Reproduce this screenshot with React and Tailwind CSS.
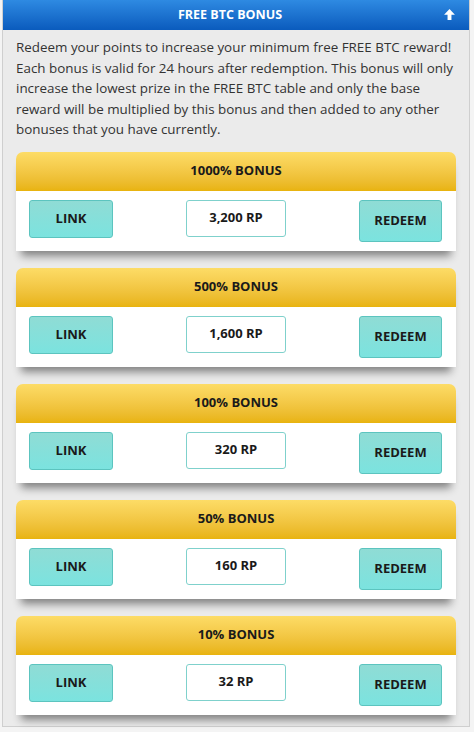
import React from "react";

const bonuses = [
  { pct: "1000%", rp: "3,200 RP" },
  { pct: "500%", rp: "1,600 RP" },
  { pct: "100%", rp: "320 RP" },
  { pct: "50%", rp: "160 RP" },
  { pct: "10%", rp: "32 RP" },
];

const BonusCard = ({ pct, rp }) => (
  <div className="rounded-t-[7px] shadow-[0_10px_8px_-5px_rgba(0,0,0,0.45)]">
    <div className="h-[39px] rounded-t-[7px] bg-gradient-to-b from-[#fddc66] to-[#e8b30c] flex items-center justify-center text-[13px] font-bold text-[#1a1a1a]">
      {pct} BONUS
    </div>
    <div className="h-[60px] bg-white flex items-start justify-between pl-[13px] pr-[14px] pt-[9px]">
      <button className="w-[84px] h-[38px] rounded-[3px] border border-[#5cc4bf] bg-gradient-to-b from-[#8fdcd5] to-[#7be3df] text-[13px] font-bold text-[#1a1a1a]">
        LINK
      </button>
      <div className="w-[100px] h-[37px] rounded-[3px] border border-[#7fd1cc] bg-white flex items-center justify-center text-[13px] font-bold text-[#1a1a1a]">
        {rp}
      </div>
      <button className="w-[83px] h-[42px] rounded-[3px] border border-[#5cc4bf] bg-gradient-to-b from-[#8fdcd5] to-[#7be3df] text-[13px] font-bold text-[#1a1a1a]">
        REDEEM
      </button>
    </div>
  </div>
);

export default function App() {
  return (
    <div className="w-[474px] h-[732px] bg-[#f4f4f4] font-['Open_Sans',sans-serif]">
      <div className="ml-[2px] w-[468px] h-[727px] border-x border-b border-[#cfcfcf] bg-[#ebebeb]">
        <div className="h-[30px] bg-gradient-to-b from-[#2e8ae2] to-[#0a5bbd] flex items-center justify-center pr-[12px] relative">
          <span className="text-[12.5px] font-bold text-white">FREE BTC BONUS</span>
          <svg className="absolute right-[13px] top-[8px]" width="13" height="13" viewBox="0 0 12 12">
            <path d="M6 1 L11 6.2 L7.8 6.2 L7.8 11 L4.2 11 L4.2 6.2 L1 6.2 Z" fill="white" />
          </svg>
        </div>
        <p className="pl-[13px] pr-[8px] pt-[7px] text-[13.4px] leading-[20.5px] text-[#333]">
          Redeem your points to increase your minimum free FREE BTC reward! Each bonus is valid for 24 hours after redemption. This bonus will only increase the lowest prize in the FREE BTC table and only the base reward will be multiplied by this bonus and then added to any other bonuses that you have currently.
        </p>
        <div className="mt-[12px] mx-[13px] flex flex-col gap-[17px]">
          {bonuses.map((b) => (
            <BonusCard key={b.pct} {...b} />
          ))}
        </div>
      </div>
    </div>
  );
}
